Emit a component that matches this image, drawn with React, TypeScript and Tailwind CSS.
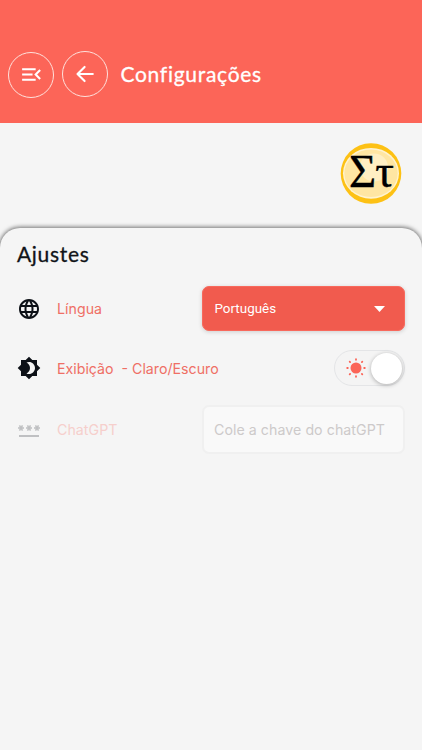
import React from "react";
import { MdMenuOpen, MdLanguage, MdBrightness4, MdPassword } from "react-icons/md";

function BackArrow() {
  return (
    <svg width="24" height="24" viewBox="0 0 24 24" fill="none" stroke="currentColor" strokeWidth="2.1" strokeLinecap="round" strokeLinejoin="round">
      <path d="M19.8 12H4.6M11.6 4.9L4.5 12l7.1 7.1" />
    </svg>
  );
}

function Logo() {
  return (
    <svg width="62" height="62" viewBox="0 0 62 62">
      <circle cx="31" cy="30.5" r="30.3" fill="#fdc114" />
      <ellipse cx="31" cy="30.3" rx="28" ry="25.4" fill="#fff3cf" />
      <ellipse cx="31" cy="30.3" rx="26.6" ry="23.8" fill="#ffe6a3" />
      <circle cx="34" cy="24.5" r="14" fill="#ffefc3" />
      <text x="9" y="43.7" fontSize="46" fontFamily="'Liberation Serif', serif" stroke="#000" strokeWidth="0.4" textLength="45" lengthAdjust="spacingAndGlyphs">Στ</text>
    </svg>
  );
}

function Sun() {
  return (
    <svg width="20" height="20" viewBox="0 0 20 20" fill="#fb6558">
      <circle cx="10" cy="10" r="5.5" />
      <g stroke="#fb6558" strokeWidth="1.8" strokeLinecap="round">
        <path d="M10 1.2v.6M10 18.2v.6M1.2 10h.6M18.2 10h.6M3.7 3.7l.4.4M15.9 15.9l.4.4M3.7 16.3l.4-.4M15.9 4.1l.4-.4" />
      </g>
    </svg>
  );
}

export default function App() {
  return (
    <div className="flex h-[750px] w-[422px] flex-col overflow-hidden bg-[#f5f5f5] font-['Inter',sans-serif]">
      <header className="flex h-[122.5px] shrink-0 items-start bg-[#fc6558] pl-2 pt-[50px] text-white">
        <button className="ml-[0.4px] mt-[1.5px] flex size-[46px] items-center justify-center rounded-full border border-[#ffe1dc]">
          <MdMenuOpen size={25} />
        </button>
        <button className="ml-2 mt-[0.5px] flex size-[46px] items-center justify-center rounded-full border border-[#ffe1dc]">
          <BackArrow />
        </button>
        <h1 className="ml-[12px] mt-[9.5px] whitespace-nowrap font-['Lato',sans-serif] text-[21px] font-normal leading-7 tracking-[0.72px] [-webkit-text-stroke:0.3px_white]">
          Configurações
        </h1>
      </header>

      <div className="flex h-[105.5px] shrink-0 justify-end pr-5 pt-[20px]">
        <Logo />
      </div>

      <main className="flex-1 rounded-t-[20px] bg-[#f5f5f5] px-[17px] shadow-[0_0_4px_1px_rgba(0,0,0,0.55)]">
        <h2 className="pt-[12px] font-['Lato',sans-serif] text-[21px] font-normal leading-7 tracking-[0.7px] text-[#111318] [-webkit-text-stroke:0.3px_#111318]">
          Ajustes
        </h2>

        <div className="mt-[18px] flex h-[45px] items-center">
          <MdLanguage size={24} color="#0d1117" />
          <span className="ml-4 pt-px text-[14.2px] tracking-[0.03px] text-[#ef6f65]">Língua</span>
          <button className="ml-auto flex h-[45px] w-[203.5px] items-center justify-between rounded-[7px] border border-[#f8695c] bg-[#f15b4e] pl-3 pr-[19px] text-white shadow-[0_1px_4px_rgba(0,0,0,0.16)]">
            <span className="pt-[2px] font-['Roboto',sans-serif] text-[13.4px]">Português</span>
            <svg width="11" height="6" viewBox="0 0 11 6" fill="white">
              <path d="M0 0h11L5.5 6z" />
            </svg>
          </button>
        </div>

        <div className="mt-[18.5px] flex h-[37px] items-center">
          <MdBrightness4 size={24} color="#0d1117" />
          <span className="ml-4 whitespace-pre pt-px text-[14.2px] text-[#ef6f65]">Exibição  - Claro/Escuro</span>
          <button className="ml-auto flex h-[36px] w-[71px] items-center justify-between rounded-full border border-[#e4e5e7] bg-[#f4f4f4] pl-[11px] pr-[2px]">
            <Sun />
            <span className="size-[31px] rounded-full bg-white shadow-[0_1px_4px_rgba(0,0,0,0.3)]" />
          </button>
        </div>

        <div className="mt-[18.5px] flex h-[49px] items-center">
          <MdPassword size={24} color="#bfc0c2" />
          <span className="ml-4 pt-px text-[14.2px] tracking-[0.05px] text-[#f6cfcc]">ChatGPT</span>
          <input
            className="ml-auto h-[49px] w-[203px] rounded-[7px] border-2 border-[#f0f0f0] bg-[#f9f9f9] pl-[10px] text-[14.2px] tracking-[0.05px] placeholder:text-[#cdcaca]"
            placeholder="Cole a chave do chatGPT"
          />
        </div>
      </main>
    </div>
  );
}
